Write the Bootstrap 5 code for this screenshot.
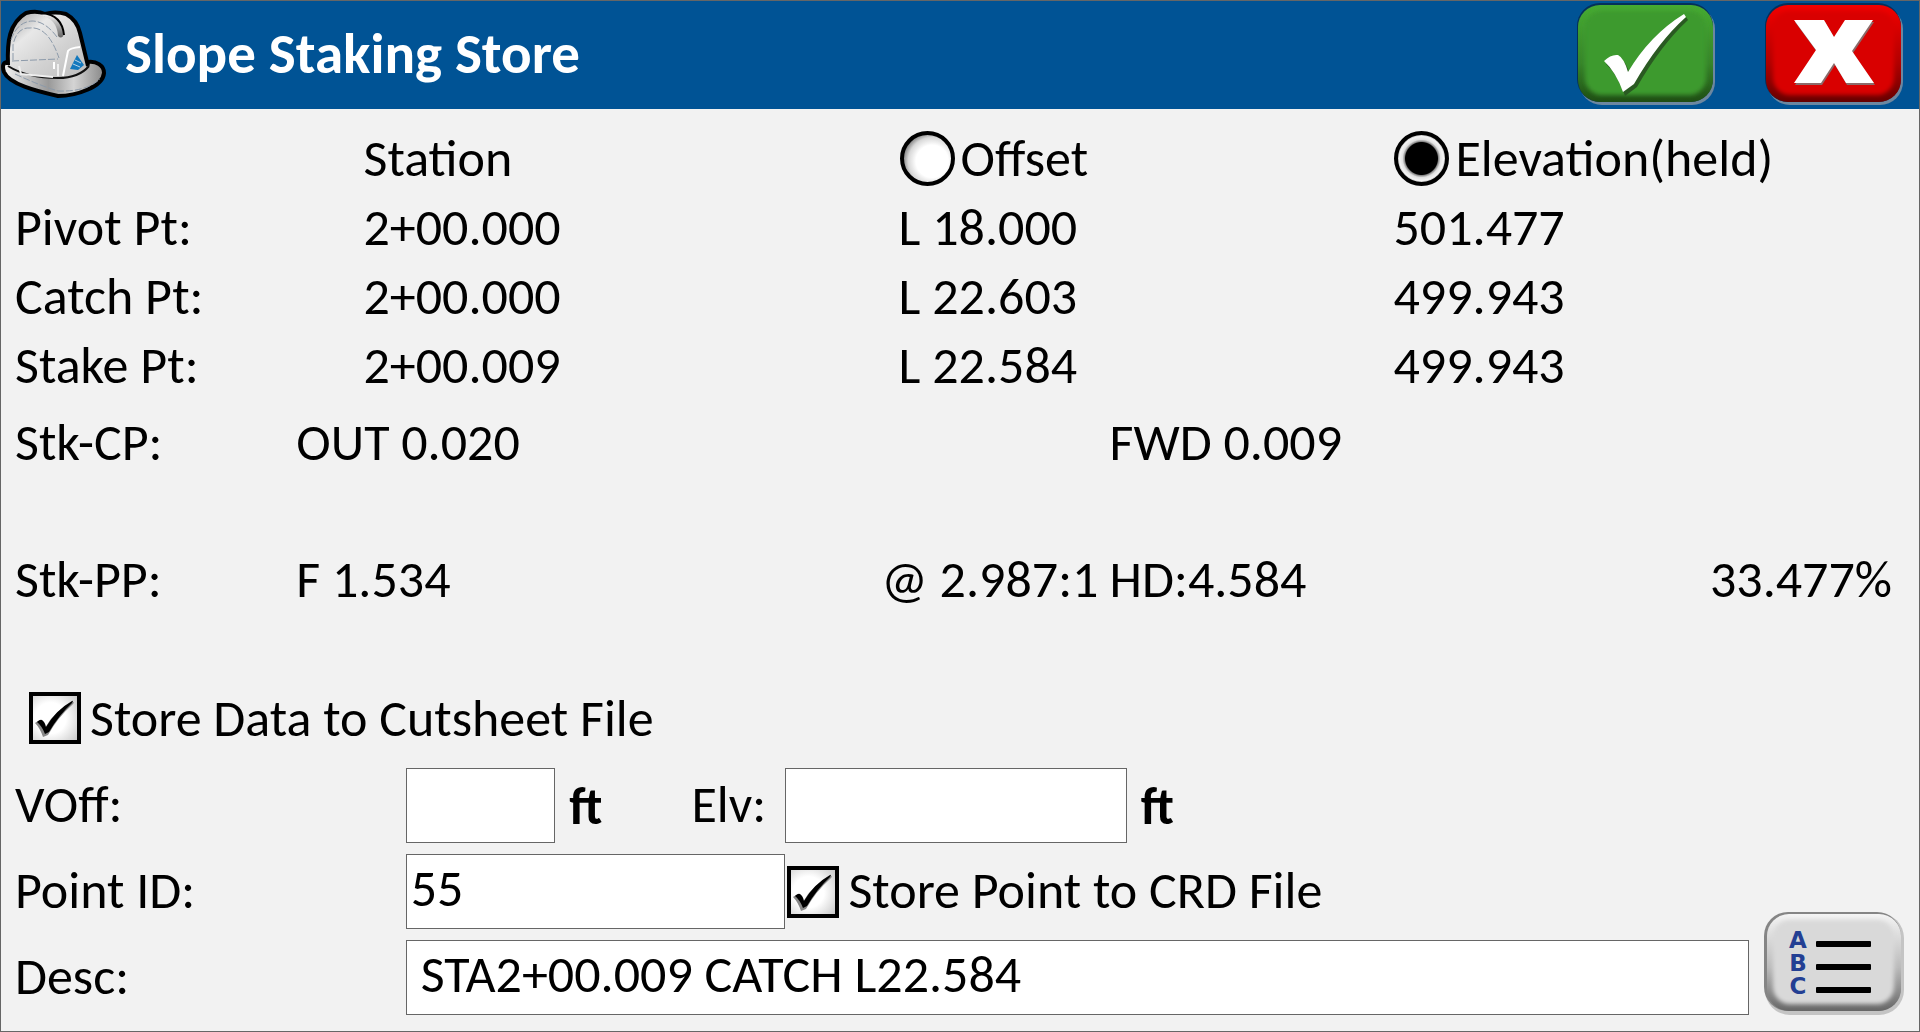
<!DOCTYPE html>
<html lang="en">
<head>
<meta charset="utf-8">
<meta name="viewport" content="width=device-width, initial-scale=1">
<title>Slope Staking Store</title>
<link href="https://cdn.jsdelivr.net/npm/bootstrap@5.3.0/dist/css/bootstrap.min.css" rel="stylesheet">
<style>
  body { background: #f2f2f2; color: #000; font: 52px/68px Calibri, Carlito, Lato, sans-serif; }
  .app-window { border: 1px solid #666; min-height: 100vh; }
  .title-bar { background: #005395; height: 108px; padding: 0 15px 3px 0; }
  .title-bar h1 { font-size: 57px; line-height: 68px; font-weight: 700; padding-left: 18px; }
  .face-btn { background: none; border: 0; padding: 0; line-height: 0; }
  .actions { gap: 48px; }

  .points-table { table-layout: fixed; margin-top: 14px; }
  .points-table th, .points-table td { padding: 0; height: 69px; font-weight: 400; vertical-align: middle; text-align: left; }
  .points-table tr > :first-child { padding-left: 14px; }
  .c-name { width: 18.9%; }
  .c-station { width: 27.9%; }
  .c-offset { width: 25.8%; }

  .stake-row { display: grid; grid-template-columns: 15.4% 30.5% 11.9% 1fr auto; height: 69px; align-items: center; }
  .stake-row > :first-child { padding-left: 14px; }
  .stake-row > :nth-child(5) { padding-right: 27px; }
  .stake-list { margin: 8px 0 70px; gap: 68px; }

  .radio-dot, .tick-box { appearance: none; flex: none; margin: 0; }
  .radio-dot { width: 55px; height: 55px; border: 4px solid #000; border-radius: 50%; margin: 2px 0 0 1px;
    background: radial-gradient(circle at 60% 56%, #fff 42%, #d8d8d8 62%, #888 75%); }
  .radio-dot:checked { background: radial-gradient(circle at 50% 50%, #000 16px, #888 17px, #e0e0e0 19px, #f4f4f4 22px, #999 25px); }
  .tick-box { width: 52px; height: 52px; border: 4px solid #000; background: #fff; }
  .tick-box:checked { background: url("data:image/svg+xml,%3Csvg xmlns='http://www.w3.org/2000/svg' viewBox='0 0 44 44'%3E%3Cpath d='M3 26Q7 23 9 24Q12 26 13 31Q22 14 41 5Q43 5 40 8Q26 20 16 38L11 40Q8 31 3 26Z' fill='%23888' transform='translate(-1 1)'/%3E%3Cpath d='M4 26Q7 23 9 24Q12 26 13 31Q23 14 39 5Q41 4 39 7Q26 19 16 36L12 38Q9 30 4 26Z'/%3E%3C/svg%3E") center/44px 44px no-repeat, radial-gradient(circle at 40% 50%, #fff 45%, #c8c8c8 100%); }
  .radio-label { padding-left: 6px; }
  .tick-label { padding-left: 9px; }
  .tick-line { height: 69px; padding-left: 28px; }
  .crd-tick { margin-left: 2px; }

  .entry-form { margin-top: 16px; gap: 11px; padding-bottom: 15px; }
  .entry-row { height: 75px; }
  .entry-row label { padding-bottom: 4px; }
  .field-name { width: 21.1%; padding-left: 14px; }
  .text-field { height: 75px; border: 1px solid #666; background: #fff; color: #000; padding: 0 0 8px 4px; min-width: 0; outline: 0; }
  .w-voff { width: 7.8%; }
  .w-elv { width: 17.8%; }
  .w-point { width: 19.8%; }
  .w-unit { width: 7.1%; }
  .w-elv-name { width: 4.9%; }
  .unit { font-weight: 700; padding-left: 14px; }
  .desc-field { padding-left: 14px; margin-right: 14px; }
  .list-btn { margin: -30px 14px 0 0; }
</style>
<script src="https://cdn.jsdelivr.net/npm/bootstrap@5.3.0/dist/js/bootstrap.bundle.min.js"></script>
</head>
<body>
<div class="app-window">
  <header class="title-bar d-flex align-items-center">
    <svg width="106" height="104" viewBox="0 0 106 104" aria-hidden="true">
      <defs>
        <linearGradient id="dome" x1="0" y1="0" x2="1" y2="1"><stop offset="0" stop-color="#999"/><stop offset=".3" stop-color="#e8e8e8"/><stop offset=".6" stop-color="#d2d2d2"/><stop offset="1" stop-color="#bcbcbc"/></linearGradient>
        <linearGradient id="brim" x1="0" y1="0" x2="1" y2="0"><stop offset="0" stop-color="#f4f4f4"/><stop offset=".45" stop-color="#999"/><stop offset=".7" stop-color="#d4d4d4"/><stop offset="1" stop-color="#888"/></linearGradient>
        <linearGradient id="ridge" x1="0" y1="0" x2="0" y2="1"><stop offset="0" stop-color="#f2f2f2"/><stop offset="1" stop-color="#666"/></linearGradient>
      </defs>
      <path d="M7 60C2 60 1 64 3 70C8 82 35 89 57 94C75 94 102 85 103 71C103 63 95 59 87 60Z" fill="url(#brim)" stroke="#000" stroke-width="4"/>
      <path d="M7 63C6 40 8 21 25 11Q36 8 44 12Q54 9 65 12Q76 18 79 31L87 64Q77 76 58 76Q28 76 7 63Z" fill="url(#dome)"/>
      <path d="M7 63C6 40 8 21 25 11Q36 8 44 12Q54 9 65 12Q76 18 79 31L87 64" fill="none" stroke="#000" stroke-width="4"/>
      <path d="M7 64Q26 76 57 76Q78 76 88 64" fill="none" stroke="#111" stroke-width="2"/>
      <path d="M38 13Q56 16 57 34Q61 38 63 32Q61 16 45 12Z" fill="url(#ridge)"/>
      <path d="M41 11Q61 13 63 33" fill="none" stroke="#000" stroke-width="2"/>
      <path d="M10 38Q16 20 31 19Q44 19 56 35M12 58V43Q16 25 29 26Q47 24 58 56M11 59L57 57M14 72Q40 84 57 89Q85 90 99 77" fill="none" stroke="#8c9aaa" stroke-dasharray="7 2"/>
      <path d="M18 64L20 72L52 75M57 62V74" fill="none" stroke="#eee" stroke-width="2"/>
      <path d="M53 60V67" stroke="#fff" stroke-width="2"/>
      <path d="M62 74L67 49Q69 46 79 45" fill="none" stroke="#fff" stroke-width="2"/>
      <path d="M76 53L83 63L77 68L69 67Z" fill="#1378bd"/>
      <path d="M74 58L80 61M72 62L79 65" stroke="#b8d4e8" stroke-width="1"/>
    </svg>
    <h1 class="mb-0 text-white me-auto">Slope Staking Store</h1>
    <div class="actions d-flex">
      <button class="face-btn" type="button" aria-label="Accept">
        <svg width="140" height="104" viewBox="0 0 140 104">
          <defs>
            <linearGradient id="greenEdge" x1="0" y1="0" x2="0" y2="1"><stop offset="0" stop-color="#46ab32"/><stop offset=".6" stop-color="#37852a"/><stop offset="1" stop-color="#1e4d13"/></linearGradient>
            <linearGradient id="redEdge" x1="0" y1="0" x2="0" y2="1"><stop offset="0" stop-color="#f20000"/><stop offset=".6" stop-color="#b00000"/><stop offset="1" stop-color="#600"/></linearGradient>
            <filter id="soft" x="-10%" y="-10%" width="120%" height="120%"><feGaussianBlur stdDeviation="2"/></filter>
          </defs>
          <rect x="3" y="4" width="136" height="99" rx="23" fill="#6c87a0"/>
          <rect x="1" y="1" width="136" height="99" rx="23" fill="#04305a"/>
          <rect x="2" y="3" width="135" height="97" rx="22" fill="url(#greenEdge)"/>
          <rect x="9" y="9" width="121" height="84" rx="17" fill="#3e9a2f" filter="url(#soft)"/>
          <path d="M29 60Q36 53 43 54Q49 57 53 71Q75 34 109 13L111 16Q84 41 60 83L48 92Q41 71 29 60Z" fill="#2a5a22" transform="translate(1 2)"/>
          <path d="M28 59Q35 52 42 53Q48 56 52 70Q74 33 108 12L110 15Q82 40 58 82L47 90Q40 70 28 59Z" fill="#fff"/>
        </svg>
      </button>
      <button class="face-btn" type="button" aria-label="Cancel">
        <svg width="140" height="104" viewBox="0 0 140 104">
          <rect x="3" y="4" width="136" height="99" rx="23" fill="#6c87a0"/>
          <rect x="1" y="1" width="136" height="99" rx="23" fill="#04305a"/>
          <rect x="2" y="3" width="135" height="97" rx="22" fill="url(#redEdge)"/>
          <rect x="9" y="9" width="121" height="84" rx="17" fill="#d90000" filter="url(#soft)"/>
          <path d="M30 18H60L70 35L81 18H109L88 49L110 81H82L70 61L57 81H30L52 48Z" fill="#8b6a6a" transform="translate(1 2)"/>
          <path d="M30 18H60L70 35L81 18H109L88 49L110 81H82L70 61L57 81H30L52 48Z" fill="#fff"/>
        </svg>
      </button>
    </div>
  </header>

  <main>
    <table class="points-table w-100">
      <colgroup><col class="c-name"><col class="c-station"><col class="c-offset"><col></colgroup>
      <thead>
        <tr>
          <td></td>
          <th scope="col">Station</th>
          <th scope="col"><div class="d-flex align-items-center"><input class="radio-dot" type="radio" name="held" id="heldOffset"><label class="radio-label" for="heldOffset">Offset</label></div></th>
          <th scope="col"><div class="d-flex align-items-center"><input class="radio-dot" type="radio" name="held" id="heldElevation" checked><label class="radio-label" for="heldElevation">Elevation(held)</label></div></th>
        </tr>
      </thead>
      <tbody>
        <tr><th scope="row">Pivot Pt:</th><td>2+00.000</td><td>L 18.000</td><td>501.477</td></tr>
        <tr><th scope="row">Catch Pt:</th><td>2+00.000</td><td>L 22.603</td><td>499.943</td></tr>
        <tr><th scope="row">Stake Pt:</th><td>2+00.009</td><td>L 22.584</td><td>499.943</td></tr>
      </tbody>
    </table>

    <div class="stake-list d-flex flex-column">
      <div class="stake-row"><span>Stk-CP:</span><span>OUT 0.020</span><span></span><span>FWD 0.009</span></div>
      <div class="stake-row"><span>Stk-PP:</span><span>F 1.534</span><span>@ 2.987:1</span><span>HD:4.584</span><span>33.477%</span></div>
    </div>

    <form>
      <div class="tick-line d-flex align-items-center">
        <input class="tick-box" type="checkbox" id="storeCutsheet" checked>
        <label class="tick-label" for="storeCutsheet">Store Data to Cutsheet File</label>
      </div>
      <div class="entry-form d-flex flex-column">
        <div class="entry-row d-flex align-items-center">
          <label class="field-name" for="voff">VOff:</label>
          <input class="text-field w-voff" type="text" id="voff">
          <span class="unit w-unit">ft</span>
          <label class="w-elv-name" for="elv">Elv:</label>
          <input class="text-field w-elv" type="text" id="elv">
          <span class="unit">ft</span>
        </div>
        <div class="entry-row d-flex align-items-center">
          <label class="field-name" for="pointId">Point ID:</label>
          <input class="text-field w-point" type="text" id="pointId" value="55">
          <input class="tick-box crd-tick" type="checkbox" id="storeCrd" checked>
          <label class="tick-label" for="storeCrd">Store Point to CRD File</label>
        </div>
        <div class="entry-row d-flex align-items-center">
          <label class="field-name" for="desc">Desc:</label>
          <input class="text-field desc-field flex-fill" type="text" id="desc" value="STA2+00.009 CATCH L22.584">
          <button class="face-btn list-btn" type="button" aria-label="Description list">
            <svg width="142" height="104" viewBox="0 0 142 104">
              <defs><linearGradient id="greyEdge" x1="0" y1="0" x2="0" y2="1"><stop offset="0" stop-color="#f4f4f4"/><stop offset=".55" stop-color="#bbb"/><stop offset="1" stop-color="#666"/></linearGradient></defs>
              <rect x="2" y="2" width="139" height="102" rx="25" fill="#c4c4c4"/>
              <rect x="1" y="1" width="137" height="99" rx="24" fill="#858585"/>
              <rect x="4" y="3" width="134" height="97" rx="22" fill="url(#greyEdge)"/>
              <rect x="10" y="9" width="121" height="84" rx="17" fill="#d9d9d9" filter="url(#soft)"/>
              <g fill="#233f93" font-family="DejaVu Sans, sans-serif" font-weight="700" font-size="23" text-anchor="middle">
                <text x="35" y="37">A</text><text x="35" y="60">B</text><text x="35" y="83">C</text>
              </g>
              <g><rect x="53" y="30" width="55" height="6" rx="1"/><rect x="53" y="53" width="55" height="6" rx="1"/><rect x="53" y="76" width="55" height="6" rx="1"/></g>
            </svg>
          </button>
        </div>
      </div>
    </form>
  </main>
</div>
</body>
</html>
